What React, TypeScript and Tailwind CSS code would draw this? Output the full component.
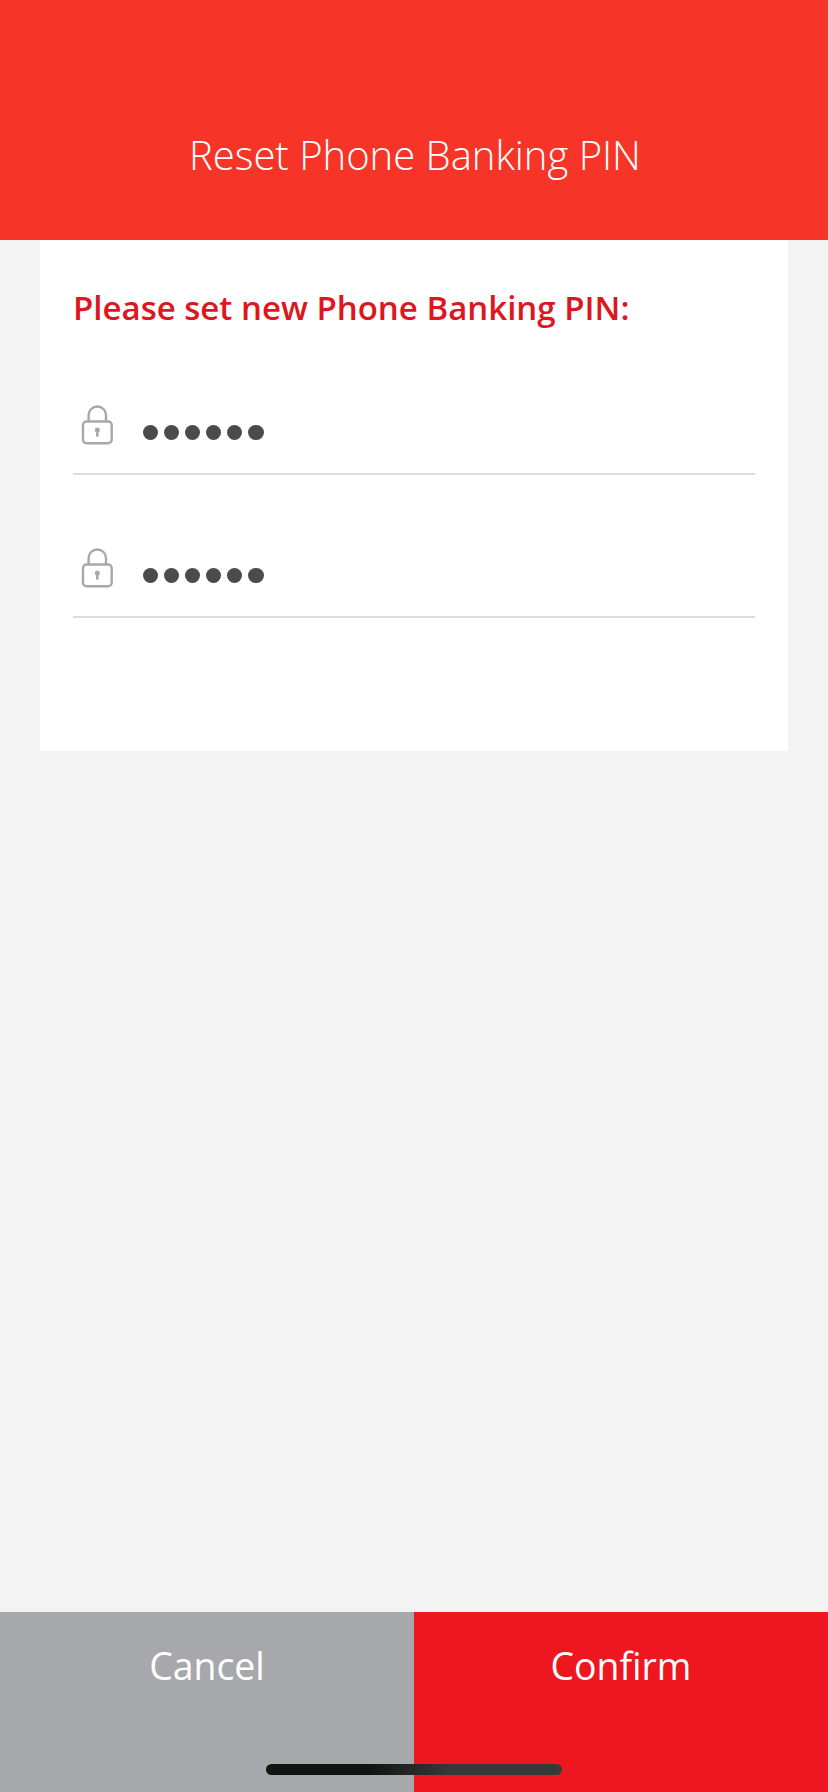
import React, { useState } from "react";

interface PinFieldProps {
  length: number;
  label: string;
}

const LockIcon: React.FC = () => (
  <svg
    width="34"
    height="42"
    viewBox="0 0 34 42"
    fill="none"
    stroke="#a7a8ac"
    strokeWidth="2.4"
    className="shrink-0 mt-[2px]"
  >
    <path d="M7.6 17.5V11a8.7 8.5 0 0 1 17.4 0V17.5" />
    <rect x="2" y="17.5" width="28.7" height="21.8" rx="3.5" />
    <circle cx="16.3" cy="26" r="2.5" fill="#a7a8ac" stroke="none" />
    <path d="M16.3 26v6.7" strokeWidth="2.6" />
  </svg>
);

const PinField: React.FC<PinFieldProps> = ({ length, label }) => (
  <div
    aria-label={label}
    className="flex items-start h-[73px] pl-[8px] border-b-2 border-[#dcdcdc]"
  >
    <LockIcon />
    <div className="flex gap-[6px] ml-[27.5px] mt-[23px]">
      {Array.from({ length }, (_, i) => (
        <span key={i} className="w-[15.2px] h-[15.2px] rounded-full bg-[#4b4b4b]" />
      ))}
    </div>
  </div>
);

const App: React.FC = () => {
  const [pinLength] = useState<number>(6);

  return (
    <div className="relative flex flex-col w-[828px] h-[1792px] bg-[#f3f3f3] font-['Open_Sans',sans-serif]">
      <header className="h-[240px] pt-[127px] pl-[2px] bg-[#f73428] text-center">
        <h1 className="text-[40px] leading-[56px] font-light text-white">
          Reset Phone Banking PIN
        </h1>
      </header>

      <main className="flex-1 px-10">
        <div className="h-[511px] px-[33px] pt-[45px] bg-white">
          <h2 className="text-[33px] leading-[46px] font-semibold text-[#de1620] whitespace-nowrap">
            Please set new Phone Banking PIN:
          </h2>
          <div className="flex flex-col gap-[70px] mt-[71px]">
            <PinField length={pinLength} label="New PIN" />
            <PinField length={pinLength} label="Confirm new PIN" />
          </div>
        </div>
      </main>

      <footer className="flex h-[180px] text-[37.4px] leading-[52px] text-white">
        <button className="flex-1 flex justify-center pt-[28px] bg-[#a7a8ac]">Cancel</button>
        <button className="flex-1 flex justify-center pt-[28px] bg-[#ee161f]">Confirm</button>
      </footer>

      {/* home indicator */}
      <div className="absolute left-[266px] bottom-[17px] w-[296px] h-[11px] rounded-full bg-linear-to-r from-[#121412] from-35% to-[#393939] to-62%" />
    </div>
  );
};

export default App;
